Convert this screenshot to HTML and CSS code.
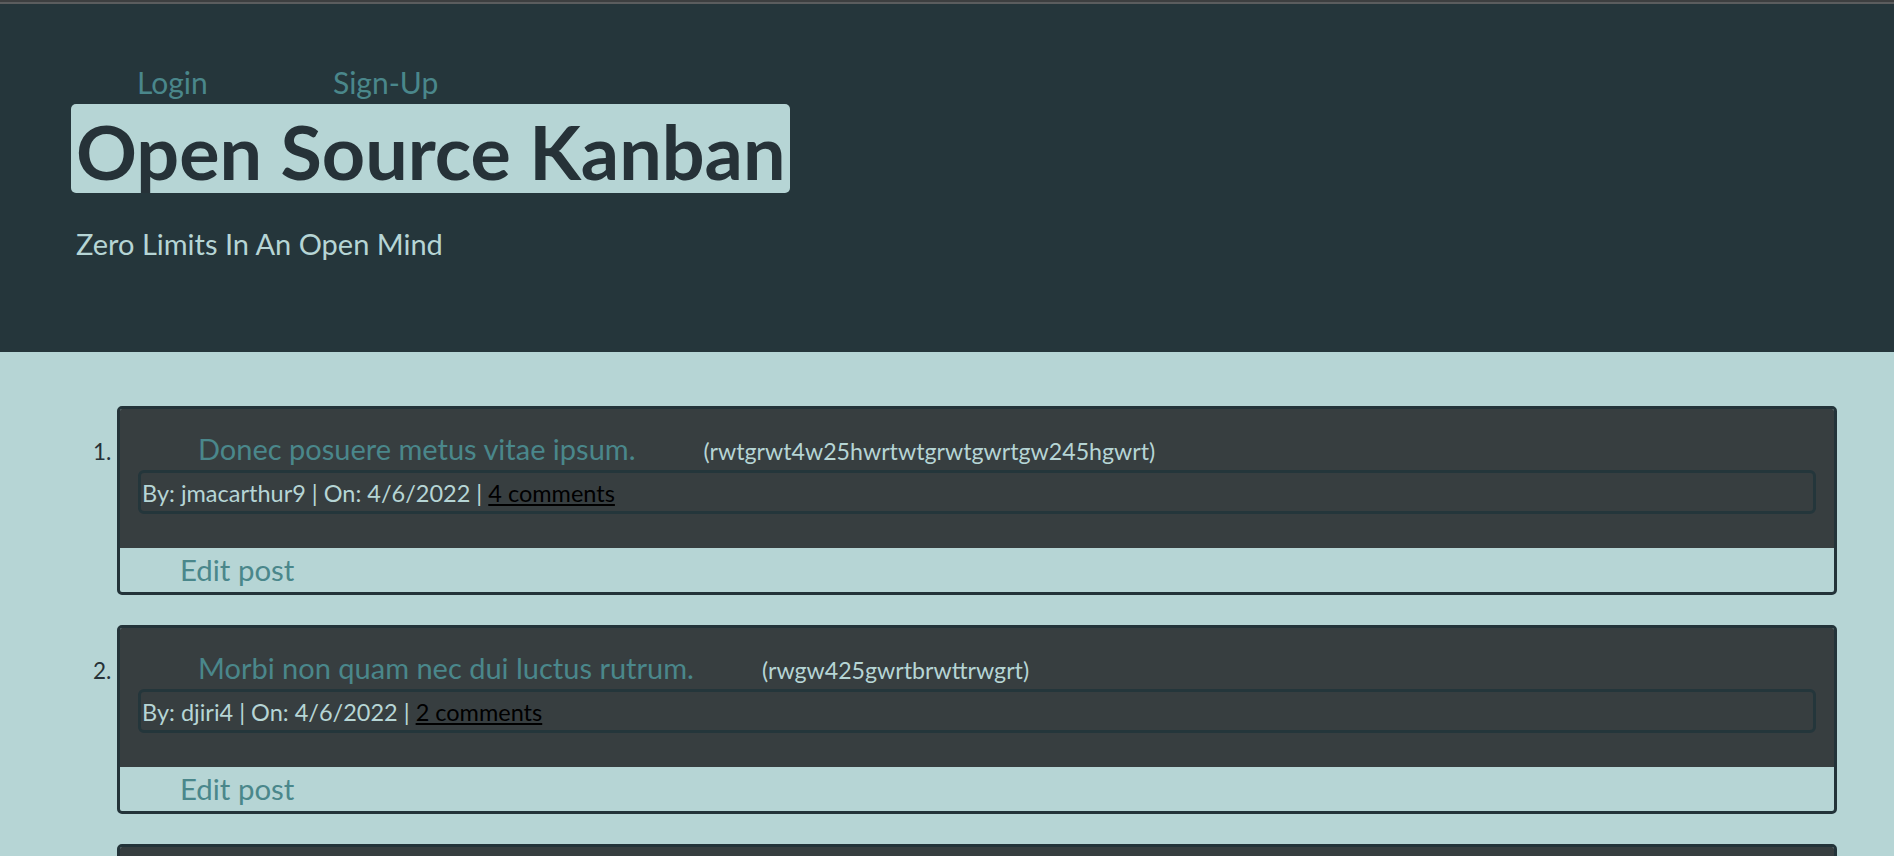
FILE: index.html
```html
<!DOCTYPE html>
<html lang="en">
<head>
<meta charset="utf-8">
<title>Open Source Kanban</title>
<link rel="stylesheet" href="styles.css">
</head>
<body>
<div class="page">
  <header class="site-header">
    <nav class="site-nav">
      <a class="nav-link" href="#">Login</a>
      <a class="nav-link" href="#">Sign-Up</a>
    </nav>
    <div class="brand"><h1 class="brand-title">Open Source Kanban</h1></div>
    <p class="tagline">Zero Limits In An Open Mind</p>
  </header>
  <main class="content">
    <ol class="post-list">
      <li class="post">
        <div class="post-body">
          <h2 class="post-heading"><a class="post-title" href="#">Donec posuere metus vitae ipsum.</a><span class="post-id">(rwtgrwt4w25hwrtwtgrwtgwrtgw245hgwrt)</span></h2>
          <div class="post-meta">By: jmacarthur9 | On: 4/6/2022 | <a class="comments-link" href="#">4 comments</a></div>
        </div>
        <div class="post-actions"><a class="edit-link" href="#">Edit post</a></div>
      </li>
      <li class="post">
        <div class="post-body">
          <h2 class="post-heading"><a class="post-title" href="#">Morbi non quam nec dui luctus rutrum.</a><span class="post-id">(rwgw425gwrtbrwttrwgrt)</span></h2>
          <div class="post-meta">By: djiri4 | On: 4/6/2022 | <a class="comments-link" href="#">2 comments</a></div>
        </div>
        <div class="post-actions"><a class="edit-link" href="#">Edit post</a></div>
      </li>
      <li class="post">
        <div class="post-body">
          <h2 class="post-heading"><a class="post-title" href="#">Nulla ut erat id mauris vulputate elementum.</a><span class="post-id">(gwrtw45gwrtgw5hwrt)</span></h2>
          <div class="post-meta">By: jmacarthur9 | On: 4/6/2022 | <a class="comments-link" href="#">1 comment</a></div>
        </div>
        <div class="post-actions"><a class="edit-link" href="#">Edit post</a></div>
      </li>
    </ol>
  </main>
</div>
</body>
</html>
```

FILE: styles.css
```css
html, body {
  margin: 0;
  padding: 0;
}

body {
  background: #b6d5d5;
  font-family: "Lato", "Open Sans", sans-serif;
  color: #b6d5d5;
}

.page {
  border-top: 2px solid #3d3f40;
}

.site-header {
  background: #25363b;
  border-top: 2px solid #5b5d5e;
  padding: 58px 0 88px 71px;
  display: flex;
  flex-direction: column;
  align-items: flex-start;
}

.site-nav {
  display: grid;
  grid-template-columns: 196px auto;
  padding-left: 66px;
  font-size: 30px;
  line-height: 40px;
}

.nav-link {
  color: #4a878b;
  text-decoration: none;
}

.brand {
  margin-top: 2px;
  background: #b6d5d5;
  border-radius: 5px;
  padding: 4px 5px 0 5px;
  height: 85px;
}

.brand-title {
  margin: 0;
  font-size: 75.5px;
  line-height: 85px;
  font-weight: 700;
  color: #263238;
  white-space: nowrap;
}

.tagline {
  margin: 31px 0 0 0;
  padding-left: 5px;
  font-size: 29px;
  line-height: 40px;
  color: #b6d5d5;
}

.content {
  padding-top: 54px;
}

.post-list {
  margin: 0;
  padding: 0 57px 0 117px;
  font-size: 23.5px;
  color: #263238;
}

.post {
  border: 3px solid #233339;
  border-radius: 5px;
  margin-bottom: 30px;
}

.post::marker {
  color: #263238;
  font-size: 22.5px;
}

.post-body {
  background: #373e40;
  border-radius: 2px 2px 0 0;
  padding: 20px 18px 34px 18px;
}

.post-heading {
  margin: 0 0 1px 0;
  padding-left: 60px;
  font-weight: 400;
  font-size: 29px;
  line-height: 40px;
}

.post-title {
  color: #4a878b;
  text-decoration: none;
}

.post-id {
  margin-left: 68px;
  font-size: 23.2px;
  line-height: 1;
  color: #b6d5d5;
}

.post-meta {
  border: 3px solid #24363b;
  border-radius: 6px;
  padding: 3px 0 0 1px;
  line-height: 35px;
  font-size: 23.5px;
  color: #b6d5d5;
}

.comments-link {
  color: #000;
  text-decoration: underline;
}

.post-actions {
  height: 44px;
  line-height: 44px;
  padding-left: 60px;
  font-size: 29.4px;
}

.edit-link {
  color: #4a878b;
  text-decoration: none;
}
```
